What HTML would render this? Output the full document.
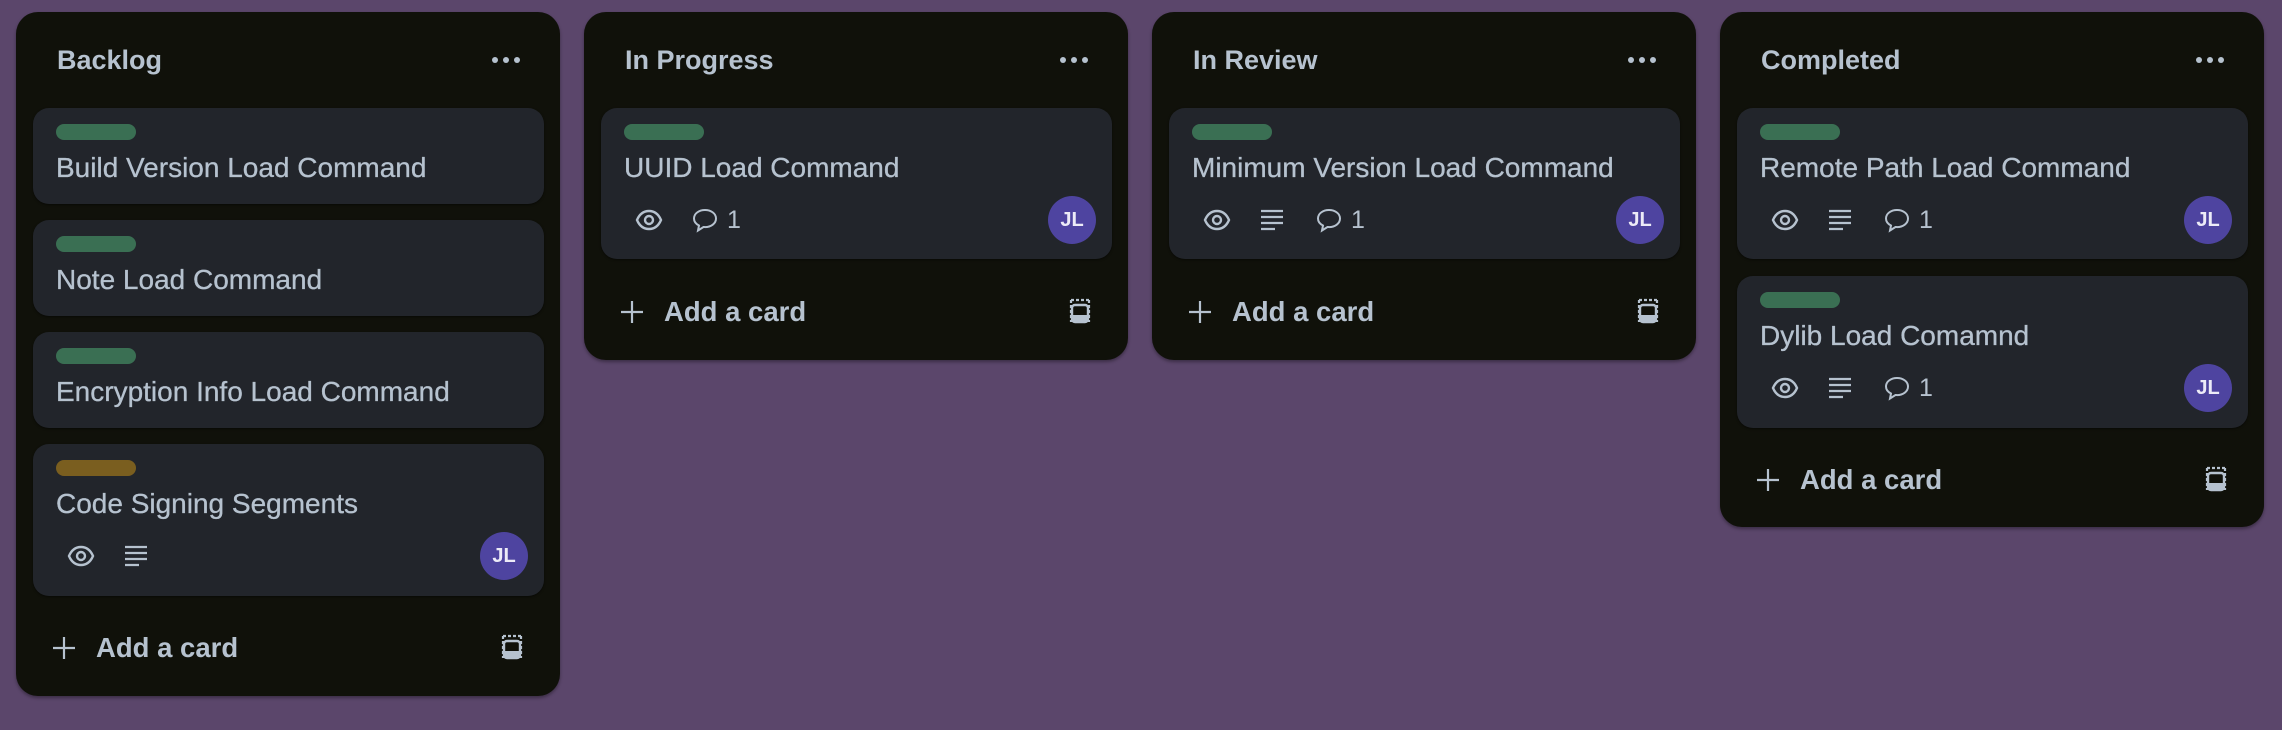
<!DOCTYPE html>
<html><head><meta charset="utf-8"><style>
*{box-sizing:border-box;margin:0;padding:0}
body{width:2282px;height:730px;background:#5b466b;font-family:"Liberation Sans",sans-serif;position:relative;overflow:hidden;color:#b6c2cf}
.col{position:absolute;top:12px;width:544px;background:#10110a;border-radius:22px;box-shadow:0 2px 3px rgba(0,0,0,.35)}
.h{position:absolute;left:41px;top:32px;font-size:27px;font-weight:bold;line-height:32px;color:#b6c2cf}
.dots{position:absolute;right:40px;top:45px;display:flex;gap:5px}
.dots i{width:6px;height:6px;border-radius:50%;background:#b6c2cf;display:block}
.card{position:absolute;left:17px;width:511px;background:#22252b;border-radius:16px;box-shadow:0 1px 2px rgba(0,0,0,.5)}
.lab{position:absolute;left:23px;top:16px;width:80px;height:16px;border-radius:8px;background:#3a6f53}
.t{position:absolute;left:23px;top:44px;font-size:28px;line-height:32px;white-space:nowrap;color:#b6c2cf;-webkit-text-stroke:0.3px #b6c2cf}
.ic{position:absolute;top:100px}
.n{position:absolute;top:97px;font-size:25px;line-height:30px}
.av{position:absolute;right:16px;top:88px;width:48px;height:48px;border-radius:50%;background:#4e44a0;color:#ecebf7;font-size:20px;font-weight:bold;line-height:48px;text-align:center}
.add{position:absolute;left:43px;font-size:27.5px;line-height:32px;font-weight:bold;color:#b6c2cf}
.add span{position:absolute;left:37px;white-space:nowrap}
.tpl{position:absolute;right:36px}
</style></head><body>

<!-- Backlog -->
<div class="col" style="left:16px;height:684px">
<div class="h">Backlog</div><div class="dots"><i></i><i></i><i></i></div>
<div class="card" style="top:96px;height:96px"><div class="lab"></div><div class="t">Build Version Load Command</div></div>
<div class="card" style="top:208px;height:96px"><div class="lab"></div><div class="t">Note Load Command</div></div>
<div class="card" style="top:320px;height:96px"><div class="lab"></div><div class="t">Encryption Info Load Command</div></div>
<div class="card" style="top:432px;height:152px"><div class="lab" style="background:#7a5e1f"></div><div class="t">Code Signing Segments</div>
<svg class="ic" style="left:34px" width="28" height="24" viewBox="0 0 28 24"><path d="M2 12C5 5 10 3 14 3s9 2 12 9c-3 7-8 9-12 9S5 19 2 12z" fill="none" stroke="#b6c2cf" stroke-width="2.4"/><circle cx="14" cy="12" r="4" fill="none" stroke="#b6c2cf" stroke-width="2.4"/></svg>
<svg class="ic" style="left:91px" width="24" height="24" viewBox="0 0 24 24"><path d="M1 3h22M1 9h22M1 15h22M1 21h14" stroke="#b6c2cf" stroke-width="2.2"/></svg>
<div class="av">JL</div></div>
<div class="add" style="top:620px"><svg style="position:absolute;left:-7px;top:4px" width="24" height="24" viewBox="0 0 24 24"><path d="M12 1v22M1 12h22" stroke="#b6c2cf" stroke-width="2.2"/></svg><span>Add a card</span></div>
<svg class="tpl" style="top:622px" width="24" height="26" viewBox="0 0 24 26"><path d="M3 2h18M3 2v22M21 2v22" stroke="#b6c2cf" stroke-width="2.2" stroke-dasharray="3 2" fill="none"/><rect x="4" y="7" width="16" height="17" rx="3" fill="none" stroke="#b6c2cf" stroke-width="2.4"/><rect x="4" y="17" width="16" height="6" fill="#b6c2cf"/></svg>
</div>

<!-- In Progress -->
<div class="col" style="left:584px;height:348px">
<div class="h">In Progress</div><div class="dots"><i></i><i></i><i></i></div>
<div class="card" style="top:96px;height:151px"><div class="lab"></div><div class="t">UUID Load Command</div>
<svg class="ic" style="left:34px" width="28" height="24" viewBox="0 0 28 24"><path d="M2 12C5 5 10 3 14 3s9 2 12 9c-3 7-8 9-12 9S5 19 2 12z" fill="none" stroke="#b6c2cf" stroke-width="2.4"/><circle cx="14" cy="12" r="4" fill="none" stroke="#b6c2cf" stroke-width="2.4"/></svg>
<svg class="ic" style="left:91px" width="26" height="26" viewBox="0 0 26 26"><path d="M13 2C7 2 2 5.5 2 10.5c0 3 2 5.5 5 7l-1 5 5.5-3.5c.5 0 1 .1 1.5.1 6 0 11-3.6 11-8.6S19 2 13 2z" fill="none" stroke="#b6c2cf" stroke-width="2"/></svg>
<div class="n" style="left:126px">1</div>
<div class="av">JL</div></div>
<div class="add" style="top:284px"><svg style="position:absolute;left:-7px;top:4px" width="24" height="24" viewBox="0 0 24 24"><path d="M12 1v22M1 12h22" stroke="#b6c2cf" stroke-width="2.2"/></svg><span>Add a card</span></div>
<svg class="tpl" style="top:286px" width="24" height="26" viewBox="0 0 24 26"><path d="M3 2h18M3 2v22M21 2v22" stroke="#b6c2cf" stroke-width="2.2" stroke-dasharray="3 2" fill="none"/><rect x="4" y="7" width="16" height="17" rx="3" fill="none" stroke="#b6c2cf" stroke-width="2.4"/><rect x="4" y="17" width="16" height="6" fill="#b6c2cf"/></svg>
</div>

<!-- In Review -->
<div class="col" style="left:1152px;height:348px">
<div class="h">In Review</div><div class="dots"><i></i><i></i><i></i></div>
<div class="card" style="top:96px;height:151px"><div class="lab"></div><div class="t">Minimum Version Load Command</div>
<svg class="ic" style="left:34px" width="28" height="24" viewBox="0 0 28 24"><path d="M2 12C5 5 10 3 14 3s9 2 12 9c-3 7-8 9-12 9S5 19 2 12z" fill="none" stroke="#b6c2cf" stroke-width="2.4"/><circle cx="14" cy="12" r="4" fill="none" stroke="#b6c2cf" stroke-width="2.4"/></svg>
<svg class="ic" style="left:91px" width="24" height="24" viewBox="0 0 24 24"><path d="M1 3h22M1 9h22M1 15h22M1 21h14" stroke="#b6c2cf" stroke-width="2.2"/></svg>
<svg class="ic" style="left:147px" width="26" height="26" viewBox="0 0 26 26"><path d="M13 2C7 2 2 5.5 2 10.5c0 3 2 5.5 5 7l-1 5 5.5-3.5c.5 0 1 .1 1.5.1 6 0 11-3.6 11-8.6S19 2 13 2z" fill="none" stroke="#b6c2cf" stroke-width="2"/></svg>
<div class="n" style="left:182px">1</div>
<div class="av">JL</div></div>
<div class="add" style="top:284px"><svg style="position:absolute;left:-7px;top:4px" width="24" height="24" viewBox="0 0 24 24"><path d="M12 1v22M1 12h22" stroke="#b6c2cf" stroke-width="2.2"/></svg><span>Add a card</span></div>
<svg class="tpl" style="top:286px" width="24" height="26" viewBox="0 0 24 26"><path d="M3 2h18M3 2v22M21 2v22" stroke="#b6c2cf" stroke-width="2.2" stroke-dasharray="3 2" fill="none"/><rect x="4" y="7" width="16" height="17" rx="3" fill="none" stroke="#b6c2cf" stroke-width="2.4"/><rect x="4" y="17" width="16" height="6" fill="#b6c2cf"/></svg>
</div>

<!-- Completed -->
<div class="col" style="left:1720px;height:515px">
<div class="h">Completed</div><div class="dots"><i></i><i></i><i></i></div>
<div class="card" style="top:96px;height:151px"><div class="lab"></div><div class="t">Remote Path Load Command</div>
<svg class="ic" style="left:34px" width="28" height="24" viewBox="0 0 28 24"><path d="M2 12C5 5 10 3 14 3s9 2 12 9c-3 7-8 9-12 9S5 19 2 12z" fill="none" stroke="#b6c2cf" stroke-width="2.4"/><circle cx="14" cy="12" r="4" fill="none" stroke="#b6c2cf" stroke-width="2.4"/></svg>
<svg class="ic" style="left:91px" width="24" height="24" viewBox="0 0 24 24"><path d="M1 3h22M1 9h22M1 15h22M1 21h14" stroke="#b6c2cf" stroke-width="2.2"/></svg>
<svg class="ic" style="left:147px" width="26" height="26" viewBox="0 0 26 26"><path d="M13 2C7 2 2 5.5 2 10.5c0 3 2 5.5 5 7l-1 5 5.5-3.5c.5 0 1 .1 1.5.1 6 0 11-3.6 11-8.6S19 2 13 2z" fill="none" stroke="#b6c2cf" stroke-width="2"/></svg>
<div class="n" style="left:182px">1</div>
<div class="av">JL</div></div>
<div class="card" style="top:264px;height:152px"><div class="lab"></div><div class="t">Dylib Load Comamnd</div>
<svg class="ic" style="left:34px" width="28" height="24" viewBox="0 0 28 24"><path d="M2 12C5 5 10 3 14 3s9 2 12 9c-3 7-8 9-12 9S5 19 2 12z" fill="none" stroke="#b6c2cf" stroke-width="2.4"/><circle cx="14" cy="12" r="4" fill="none" stroke="#b6c2cf" stroke-width="2.4"/></svg>
<svg class="ic" style="left:91px" width="24" height="24" viewBox="0 0 24 24"><path d="M1 3h22M1 9h22M1 15h22M1 21h14" stroke="#b6c2cf" stroke-width="2.2"/></svg>
<svg class="ic" style="left:147px" width="26" height="26" viewBox="0 0 26 26"><path d="M13 2C7 2 2 5.5 2 10.5c0 3 2 5.5 5 7l-1 5 5.5-3.5c.5 0 1 .1 1.5.1 6 0 11-3.6 11-8.6S19 2 13 2z" fill="none" stroke="#b6c2cf" stroke-width="2"/></svg>
<div class="n" style="left:182px">1</div>
<div class="av">JL</div></div>
<div class="add" style="top:452px"><svg style="position:absolute;left:-7px;top:4px" width="24" height="24" viewBox="0 0 24 24"><path d="M12 1v22M1 12h22" stroke="#b6c2cf" stroke-width="2.2"/></svg><span>Add a card</span></div>
<svg class="tpl" style="top:454px" width="24" height="26" viewBox="0 0 24 26"><path d="M3 2h18M3 2v22M21 2v22" stroke="#b6c2cf" stroke-width="2.2" stroke-dasharray="3 2" fill="none"/><rect x="4" y="7" width="16" height="17" rx="3" fill="none" stroke="#b6c2cf" stroke-width="2.4"/><rect x="4" y="17" width="16" height="6" fill="#b6c2cf"/></svg>
</div>

</body></html>
